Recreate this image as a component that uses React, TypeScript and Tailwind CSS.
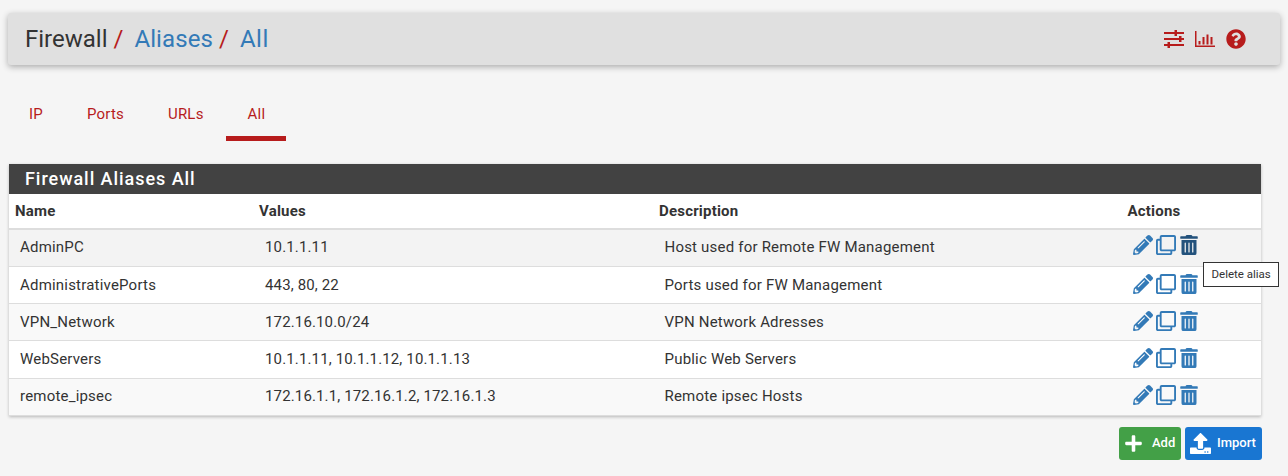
import React from "react";
import { FaPencilAlt, FaRegClone, FaTrashAlt, FaQuestionCircle, FaPlus, FaUpload } from "react-icons/fa";

const rows = [
  ["AdminPC", "10.1.1.11", "Host used for Remote FW Management"],
  ["AdministrativePorts", "443, 80, 22", "Ports used for FW Management"],
  ["VPN_Network", "172.16.10.0/24", "VPN Network Adresses"],
  ["WebServers", "10.1.1.11, 10.1.1.12, 10.1.1.13", "Public Web Servers"],
  ["remote_ipsec", "172.16.1.1, 172.16.1.2, 172.16.1.3", "Remote ipsec Hosts"],
];

const rowClass = [
  "h-[37px] bg-[#f3f3f3]",
  "h-[37px] bg-white",
  "h-[37px] bg-[#f9f9f9]",
  "h-[38px] bg-white",
  "h-[37px] bg-[#f9f9f9]",
];
const cellPad = ["pb-[1px]", "pt-[2px]", "pt-[2px]", "pt-[1px]", ""];

function Sliders() {
  return (
    <svg width="20" height="18" viewBox="0 0 20 18" fill="#b71c1c">
      <rect x="0" y="2" width="20" height="2" />
      <rect x="0" y="8" width="20" height="2" />
      <rect x="0" y="14" width="20" height="2" />
      <rect x="10.5" y="0" width="2.5" height="6" />
      <rect x="15" y="6" width="2.5" height="6" />
      <rect x="3.5" y="12" width="2.5" height="6" />
    </svg>
  );
}

function Chart() {
  return (
    <svg width="20" height="16" viewBox="0 0 20 16" fill="#b71c1c">
      <rect x="0" y="0" width="1.5" height="16" />
      <rect x="0" y="14.5" width="20" height="1.5" />
      <rect x="3.5" y="10" width="2" height="3.5" />
      <rect x="7.5" y="6" width="2" height="7.5" />
      <rect x="11.5" y="3.5" width="2" height="10" />
      <rect x="15.5" y="6" width="2" height="7.5" />
    </svg>
  );
}

export default function App() {
  return (
    <div className="w-[1288px] h-[476px] overflow-hidden bg-[#f5f5f5] text-[#333] font-['Roboto',sans-serif] pt-[13px]">
      <div className="ml-2 mr-2 h-[52px] bg-[#e0e0e0] rounded-[3px] shadow-[0_2px_6px_rgba(0,0,0,0.3)] flex items-center justify-between pl-[17px] pr-[34px]">
        <div className="text-[24px] leading-none flex">
          <span className="text-[#333]">Firewall</span>
          <span className="text-[#b71c1c] ml-[6px]">/</span>
          <span className="text-[#337ab7] ml-[11px] tracking-[0.1px]">Aliases</span>
          <span className="text-[#b71c1c] ml-[6px]">/</span>
          <span className="text-[#337ab7] ml-[11px] tracking-[0.5px]">All</span>
        </div>
        <div className="flex items-center gap-[11px]">
          <Sliders />
          <Chart />
          <FaQuestionCircle className="text-[#b71c1c] text-[20px]" />
        </div>
      </div>

      <div className="flex mt-[30px] ml-[7px] text-[15px] text-[#b71c1c] h-[46px]">
        {["IP", "Ports", "URLs", "All"].map((t) => (
          <div
            key={t}
            className={
              "px-[22px] pt-[11px] leading-[17px] tracking-[0.2px] " +
              (t === "All" ? "border-b-[5px] border-[#b71c1c] w-[60px] text-center" : "")
            }
          >
            {t}
          </div>
        ))}
      </div>

      <div className="ml-[9px] mt-[23px] w-[1252px] bg-white shadow-[0_1px_3px_rgba(0,0,0,0.25)]">
        <div className="h-[30px] bg-[#424242] text-white font-medium text-[18px] leading-[30px] pl-[16px] tracking-[0.95px]">
          Firewall Aliases All
        </div>
        <table className="w-full table-fixed border-collapse text-[15px] tracking-[0.2px]">
          <colgroup>
            <col className="w-[245px]" />
            <col className="w-[400px]" />
            <col className="w-[469px]" />
            <col />
          </colgroup>
          <thead>
            <tr className="h-[35px] border-b-2 border-[#ddd] text-left font-bold">
              <th className="pl-[6px] font-bold">Name</th>
              <th className="pl-[5px] font-bold">Values</th>
              <th className="pl-[5px] font-bold">Description</th>
              <th className="pl-[4.5px] font-bold">Actions</th>
            </tr>
          </thead>
          <tbody>
            {rows.map((r, i) => (
              <tr key={r[0]} className={"border-b border-[#ddd] " + rowClass[i]}>
                <td className={"pl-[11px] " + cellPad[i]}>{r[0]}</td>
                <td className={"pl-[11px] tracking-[0.14px] " + cellPad[i]}>{r[1]}</td>
                <td className={"pl-[10.5px] " + cellPad[i]}>{r[2]}</td>
                <td className={"pl-[10px] " + cellPad[i]}>
                  <div className="relative flex items-center text-[#337ab7] text-[20px] gap-[3px] -translate-y-[2px]">
                    <FaPencilAlt />
                    <FaRegClone />
                    <FaTrashAlt className={i === 0 ? "text-[#23527c]" : ""} />
                    {i === 1 && (
                      <div className="absolute left-[70px] top-[-12px] bg-white border border-[#333] text-[11.5px] tracking-normal leading-[14px] text-[#333] px-[7.5px] py-[4.5px] whitespace-nowrap">
                        Delete alias
                      </div>
                    )}
                  </div>
                </td>
              </tr>
            ))}
          </tbody>
        </table>
      </div>

      <div className="ml-[1119px] mt-[11px] flex gap-1 text-[13px] font-medium text-white">
        <div className="w-[62px] h-[33px] bg-[#43a047] rounded-[3px] flex items-center pl-[5px] gap-[9px]">
          <FaPlus className="text-[19px]" /> Add
        </div>
        <div className="w-[77px] h-[33px] bg-[#1976d2] rounded-[3px] flex items-center pl-[5px] gap-[6px]">
          <FaUpload className="text-[21px]" /> Import
        </div>
      </div>
    </div>
  );
}
